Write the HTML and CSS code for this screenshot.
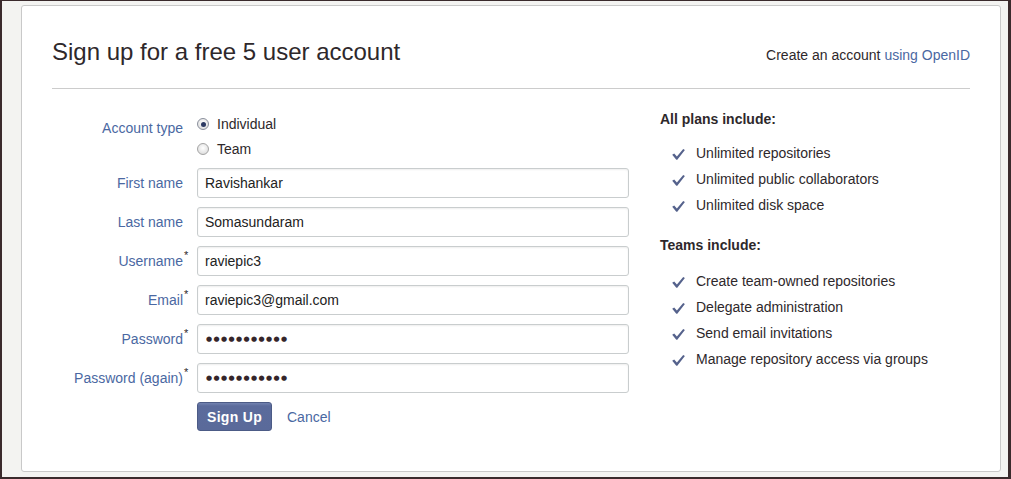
FILE: index.html
```html
<!DOCTYPE html>
<html lang="en">
<head>
<meta charset="utf-8">
<title>Sign up</title>
<link rel="stylesheet" href="styles.css">
</head>
<body>
<div class="frame">
  <div class="card">
    <header class="head">
      <h1 class="title">Sign up for a free 5 user account</h1>
      <p class="openid">Create an account <a href="#" class="link">using OpenID</a></p>
    </header>
    <div class="content">
      <form class="form">
        <div class="row row-radio">
          <span class="lbl lbl-top">Account type</span>
          <div class="radios">
            <div class="radio-line"><span class="radio checked"></span><span>Individual</span></div>
            <div class="radio-line"><span class="radio"></span><span>Team</span></div>
          </div>
        </div>
        <div class="row">
          <label class="lbl">First name</label>
          <input class="field" type="text" value="Ravishankar">
        </div>
        <div class="row">
          <label class="lbl">Last name</label>
          <input class="field" type="text" value="Somasundaram">
        </div>
        <div class="row">
          <label class="lbl">Username<sup class="req">*</sup></label>
          <input class="field" type="text" value="raviepic3">
        </div>
        <div class="row">
          <label class="lbl">Email<sup class="req">*</sup></label>
          <input class="field" type="text" value="raviepic3@gmail.com">
        </div>
        <div class="row">
          <label class="lbl">Password<sup class="req">*</sup></label>
          <input class="field dots" type="text" value="●●●●●●●●●●●">
        </div>
        <div class="row">
          <label class="lbl">Password (again)<sup class="req">*</sup></label>
          <input class="field dots" type="text" value="●●●●●●●●●●●">
        </div>
        <div class="actions">
          <button type="button" class="btn">Sign Up</button>
          <a href="#" class="link cancel">Cancel</a>
        </div>
      </form>
      <aside class="plans">
        <h4 class="plan-title">All plans include:</h4>
        <ul class="plan-list">
          <li class="plan-item"><svg class="check" viewBox="0 0 13 11"><path d="M0.2 5.8 L2.2 4.6 L4.9 7.4 L11.2 0.1 L12.9 1.1 L5.3 10.8 L4.3 10.8 Z"/></svg><span>Unlimited repositories</span></li>
          <li class="plan-item"><svg class="check" viewBox="0 0 13 11"><path d="M0.2 5.8 L2.2 4.6 L4.9 7.4 L11.2 0.1 L12.9 1.1 L5.3 10.8 L4.3 10.8 Z"/></svg><span>Unlimited public collaborators</span></li>
          <li class="plan-item"><svg class="check" viewBox="0 0 13 11"><path d="M0.2 5.8 L2.2 4.6 L4.9 7.4 L11.2 0.1 L12.9 1.1 L5.3 10.8 L4.3 10.8 Z"/></svg><span>Unlimited disk space</span></li>
        </ul>
        <h4 class="plan-title teams">Teams include:</h4>
        <ul class="plan-list">
          <li class="plan-item"><svg class="check" viewBox="0 0 13 11"><path d="M0.2 5.8 L2.2 4.6 L4.9 7.4 L11.2 0.1 L12.9 1.1 L5.3 10.8 L4.3 10.8 Z"/></svg><span>Create team-owned repositories</span></li>
          <li class="plan-item"><svg class="check" viewBox="0 0 13 11"><path d="M0.2 5.8 L2.2 4.6 L4.9 7.4 L11.2 0.1 L12.9 1.1 L5.3 10.8 L4.3 10.8 Z"/></svg><span>Delegate administration</span></li>
          <li class="plan-item"><svg class="check" viewBox="0 0 13 11"><path d="M0.2 5.8 L2.2 4.6 L4.9 7.4 L11.2 0.1 L12.9 1.1 L5.3 10.8 L4.3 10.8 Z"/></svg><span>Send email invitations</span></li>
          <li class="plan-item"><svg class="check" viewBox="0 0 13 11"><path d="M0.2 5.8 L2.2 4.6 L4.9 7.4 L11.2 0.1 L12.9 1.1 L5.3 10.8 L4.3 10.8 Z"/></svg><span>Manage repository access via groups</span></li>
        </ul>
      </aside>
    </div>
  </div>
</div>
</body>
</html>
```
FILE: styles.css
```css
* { box-sizing: border-box; }

html, body {
  margin: 0;
  padding: 0;
}

body {
  font-family: "Liberation Sans", Arial, sans-serif;
  font-size: 14px;
  color: #333;
  background: #f3f3f1;
}

.frame {
  width: 1011px;
  height: 479px;
  display: flex;
  flex-direction: column;
  border-style: solid;
  border-color: #3a2a2c;
  border-width: 1px 3px 2px 2px;
  padding: 4px 7px 5px 19px;
  background: #f3f3f1;
}

.card {
  flex: 1;
  background: #fff;
  border: 1px solid #c9c9c9;
  border-radius: 3px;
  padding: 32px 30px 0 30px;
}

.head {
  display: flex;
  justify-content: space-between;
  align-items: baseline;
  padding-bottom: 22px;
  border-bottom: 1px solid #cccccc;
}

.title {
  margin: 0;
  font-size: 24px;
  line-height: 28px;
  font-weight: normal;
  color: #2e282b;
}

.openid {
  margin: 0;
  font-size: 14px;
  color: #2e282b;
}

.link {
  color: #4a68a2;
  text-decoration: none;
}

.content {
  display: flex;
  gap: 31px;
  padding-top: 20px;
}

.form {
  width: 577px;
  padding-top: 5px;
  display: flex;
  flex-direction: column;
  gap: 9px;
  margin: 0;
}

.row {
  display: flex;
  align-items: center;
}

.row-radio {
  align-items: flex-start;
}

.lbl {
  width: 131px;
  margin-right: 14px;
  text-align: right;
  color: #4a68a2;
  line-height: 20px;
  white-space: nowrap;
}

.lbl-top {
  padding-top: 4px;
}

.req {
  display: inline-block;
  width: 6px;
  margin-right: -6px;
  text-align: left;
  padding-left: 1px;
  color: #2e282b;
  font-size: 11px;
  vertical-align: top;
  line-height: 10px;
  position: relative;
  top: -1px;
}

.radios {
  display: flex;
  flex-direction: column;
  gap: 5px;
}

.radio-line {
  display: flex;
  align-items: center;
  gap: 8px;
  line-height: 20px;
  color: #2e282b;
}

.radio {
  width: 12px;
  height: 12px;
  border-radius: 50%;
  border: 1px solid #a4a4a4;
  background: radial-gradient(circle at 50% 40%, #ffffff 0%, #e4e4e4 65%, #cfcfcf 100%);
  display: flex;
  align-items: center;
  justify-content: center;
}

.radio.checked {
  border-color: #8a8f9c;
}

.radio.checked::after {
  content: "";
  width: 5px;
  height: 5px;
  border-radius: 50%;
  background: #2c3a63;
}

.field {
  width: 432px;
  height: 30px;
  border: 1px solid #c9cdce;
  border-radius: 3px;
  box-shadow: inset 0 1px 2px rgba(0, 0, 0, 0.07);
  padding: 0 7px;
  font-family: "Liberation Sans", Arial, sans-serif;
  font-size: 14px;
  color: #222;
  background: #fff;
  outline: none;
}

.dots {
  font-family: "DejaVu Sans", sans-serif;
  font-size: 7px;
  letter-spacing: 1.4px;
  color: #35262a;
  padding-left: 8px;
}

.actions {
  display: flex;
  align-items: center;
  gap: 15px;
  padding-left: 145px;
  padding-top: 0;
}

.btn {
  width: 75px;
  height: 29px;
  border: 1px solid #4c5b86;
  border-radius: 3px;
  background: linear-gradient(#7282b0 0, #5b6b9c 3px, #5a6a9a 100%);
  color: #fff;
  font-family: "Liberation Sans", Arial, sans-serif;
  font-weight: bold;
  font-size: 14px;
  letter-spacing: 0.3px;
  padding: 0;
  cursor: pointer;
}

.cancel {
  font-size: 14px;
}

.plans {
  flex: 1;
}

.plan-title {
  margin: 0 0 11px;
  font-size: 14px;
  line-height: 20px;
  font-weight: bold;
  color: #2e282b;
}

.plan-title.teams {
  margin-bottom: 13px;
}

.plan-list {
  list-style: none;
  margin: 0 0 17px;
  padding: 0 0 0 12px;
}

.plan-item {
  display: flex;
  align-items: center;
  gap: 11px;
  line-height: 26px;
  height: 26px;
  color: #2e282b;
}

.check {
  width: 13px;
  height: 11px;
  fill: #55628c;
  margin-top: 3px;
  flex: none;
}
```
